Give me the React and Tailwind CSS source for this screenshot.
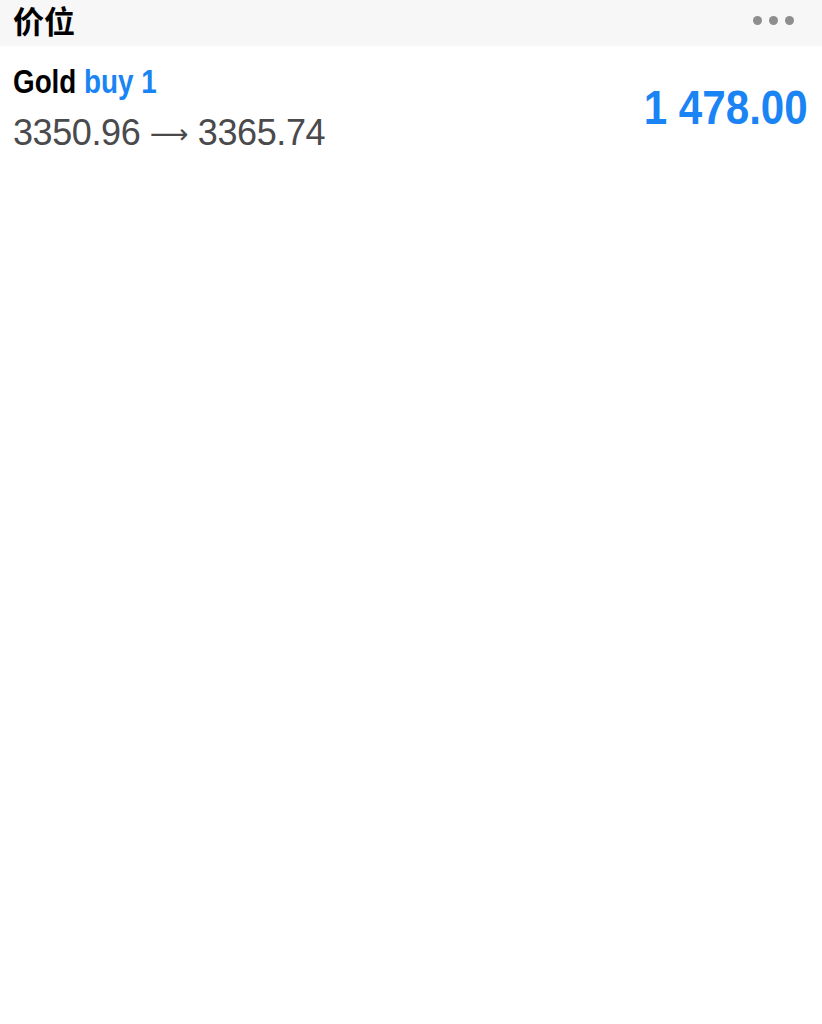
export default function App() {
  return (
    <div className="min-h-screen bg-white">
      {/* header */}
      <div className="flex h-[46px] items-center justify-between bg-[#f7f7f7] pb-[6px] pl-[13px] pr-[28px]">
        <div className="text-[31px] font-bold leading-[38px] text-black [font-family:'Noto_Sans_CJK_SC',sans-serif]">价位</div>
        <div className="flex items-center gap-[7px]">
          <span className="h-[9px] w-[9px] rounded-full bg-[#8e8e8e]" />
          <span className="h-[9px] w-[9px] rounded-full bg-[#8e8e8e]" />
          <span className="h-[9px] w-[9px] rounded-full bg-[#8e8e8e]" />
        </div>
      </div>

      {/* position row */}
      <div className="flex items-center justify-between pl-[13px] pr-[14px] pt-[16px]">
        <div>
          <div className="h-[40px] whitespace-nowrap text-[33.5px] font-bold leading-[40px] [font-family:'Liberation_Sans',Arial,sans-serif]">
            <span className="inline-block origin-left scale-x-[0.83]">
              <span className="text-black">Gold</span> <span className="text-[#1a84f5]">buy 1</span>
            </span>
          </div>
          <div className="mt-[11px] whitespace-nowrap text-[36px] leading-[40px] tracking-[-0.4px] text-[#4a4a4d] [font-family:'Liberation_Sans',Arial,sans-serif]">
            3350.96 <span className="align-[2px] text-[27px] leading-none [font-family:'DejaVu_Sans',sans-serif]">⟶</span> 3365.74
          </div>
        </div>
        <div className="text-[49px] font-bold leading-none text-[#1a84f5] [font-family:'Liberation_Sans',Arial,sans-serif]">
          <span className="inline-block origin-right scale-x-[0.86]">1 478.00</span>
        </div>
      </div>
    </div>
  )
}
